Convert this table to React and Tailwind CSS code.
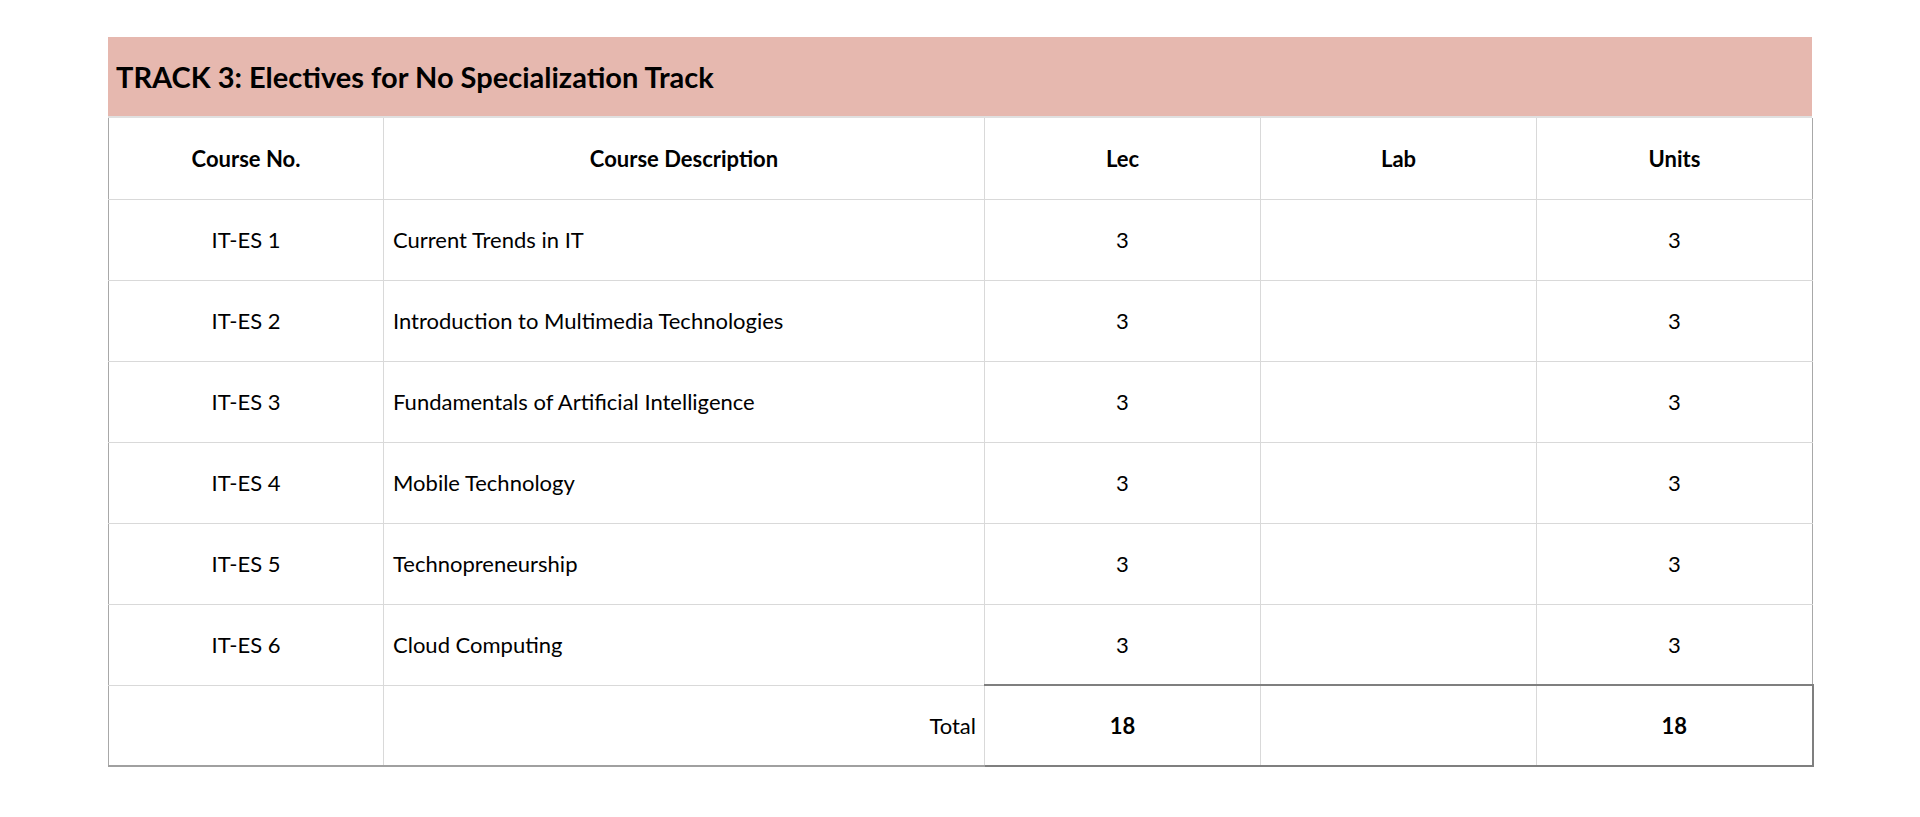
export default function App() {
  const rows = [
    ["IT-ES 1", "Current Trends in IT"],
    ["IT-ES 2", "Introduction to Multimedia Technologies"],
    ["IT-ES 3", "Fundamentals of Artificial Intelligence"],
    ["IT-ES 4", "Mobile Technology"],
    ["IT-ES 5", "Technopreneurship"],
    ["IT-ES 6", "Cloud Computing"],
  ];
  const cell = "border-r border-b border-[#d9d9d9] h-[81px] p-0 align-middle";
  return (
    <div className="w-[1920px] h-[817px] bg-white pt-[37px] pl-[108px]" style={{ fontFamily: "Lato, 'Liberation Sans', sans-serif" }}>
      <div className="w-[1704px] text-black">
        <div className="h-[81px] bg-[#e6b8af] flex items-center pl-[8px] border-b-2 border-[#e0e0e0]">
          <span className="text-[29px] font-bold">TRACK 3: Electives for No Specialization Track</span>
        </div>
        <table className="border-collapse table-fixed w-[1704px] text-[22px]">
          <colgroup>
            <col className="w-[275px]" />
            <col className="w-[601px]" />
            <col className="w-[276px]" />
            <col className="w-[276px]" />
            <col className="w-[276px]" />
          </colgroup>
          <tbody>
            <tr className="font-bold">
              <td className={`${cell} text-center border-l border-l-[#a8a8a8]`}>Course No.</td>
              <td className={`${cell} text-center`}>Course Description</td>
              <td className={`${cell} text-center`}>Lec</td>
              <td className={`${cell} text-center`}>Lab</td>
              <td className={`${cell} text-center border-r-[#a8a8a8]`}>Units</td>
            </tr>
            {rows.map(([no, desc]) => (
              <tr key={no}>
                <td className={`${cell} text-center border-l border-l-[#a8a8a8]`}>{no}</td>
                <td className={`${cell} text-left pl-[9px]`}>{desc}</td>
                <td className={`${cell} text-center`}>3</td>
                <td className={cell}></td>
                <td className={`${cell} text-center border-r-[#a8a8a8]`}>3</td>
              </tr>
            ))}
            <tr>
              <td className="h-[81px] p-0 border-l border-l-[#a8a8a8] border-b-2 border-b-[#a0a0a0] border-r border-r-[#d9d9d9]"></td>
              <td className="h-[81px] p-0 text-right pr-[8px] border-b-2 border-b-[#a0a0a0]">Total</td>
              <td className="h-[81px] p-0 text-center font-bold border-t-2 border-t-[#7f7f7f] border-b-2 border-b-[#7f7f7f] border-l border-l-[#d9d9d9] border-r border-r-[#d9d9d9]">18</td>
              <td className="h-[81px] p-0 border-t-2 border-t-[#7f7f7f] border-b-2 border-b-[#7f7f7f] border-r border-r-[#d9d9d9]"></td>
              <td className="h-[81px] p-0 text-center font-bold border-t-2 border-t-[#7f7f7f] border-b-2 border-b-[#7f7f7f] border-r-2 border-r-[#7f7f7f]">18</td>
            </tr>
          </tbody>
        </table>
      </div>
    </div>
  );
}
